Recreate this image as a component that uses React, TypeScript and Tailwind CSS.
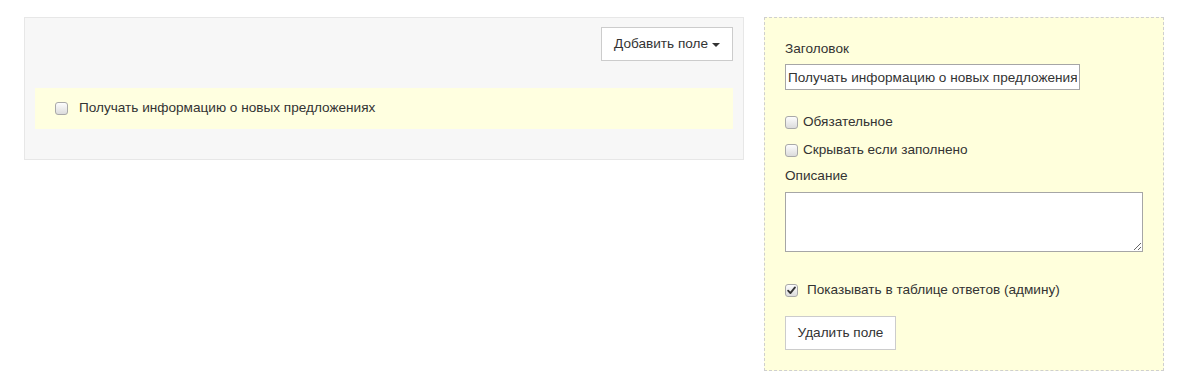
import React from "react";

function Box({ checked = false }: { checked?: boolean }) {
  return (
    <span className="relative inline-block size-[13px] shrink-0 rounded-[3px] border border-[#a9a9a9] bg-gradient-to-b from-[#fdfdfd] to-[#dcdcdc]">
      {checked ? (
        <svg viewBox="0 0 12 12" className="absolute left-[0px] top-[0px] size-[11px]" aria-hidden="true">
          <path d="M2.3 6.2 L4.8 8.8 L9.8 2.6" fill="none" stroke="#333" strokeWidth="2" strokeLinecap="round" strokeLinejoin="round" />
        </svg>
      ) : null}
    </span>
  );
}

function CheckRow({ label, checked, gap }: { label: string; checked?: boolean; gap: string }) {
  return (
    <label className={`flex items-center ${gap}`}>
      <Box checked={checked} />
      <span>{label}</span>
    </label>
  );
}

export default function App() {
  return (
    <div className="flex min-h-[389px] items-start gap-[20px] bg-white pl-[24px] pt-[17px] font-['Liberation_Sans',Arial,sans-serif] text-[13.6px] text-[#333]">
      <section className="flex h-[143px] w-[720px] flex-col border border-[#e7e7e7] bg-[#f7f7f7] px-[10px] pt-[9px]">
        <div className="flex justify-end">
          <button className="flex h-[34px] items-center gap-[4px] border border-[#cccccc] bg-white px-[12px] text-[13.6px] text-[#333]">
            Добавить поле
            <svg viewBox="0 0 8 4" className="mt-[1px] h-[4px] w-[8px]" aria-hidden="true">
              <path d="M0 0 H8 L4 4 Z" fill="#333" />
            </svg>
          </button>
        </div>
        <div className="mt-[27px] flex h-[41px] items-center bg-[#ffffe0] pl-[20px]">
          <CheckRow label="Получать информацию о новых предложениях" gap="gap-[11px]" />
        </div>
      </section>

      <section className="h-[354px] w-[400px] border border-dashed border-[#cfcfcf] bg-[#ffffdc] px-[20px] pt-[22px]">
        <div className="leading-[18px]">Заголовок</div>
        <input
          readOnly
          value="Получать информацию о новых предложениях"
          className="mt-[6px] block h-[26px] w-[295px] border border-[#a6a6a6] bg-white px-[2px] text-[13.6px] text-[#333] outline-none"
        />
        <div className="mt-[23px] flex flex-col gap-[10px] leading-[18px]">
          <CheckRow label="Обязательное" gap="gap-[5px]" />
          <CheckRow label="Скрывать если заполнено" gap="gap-[5px]" />
        </div>
        <div className="mt-[8px] leading-[18px]">Описание</div>
        <textarea
          readOnly
          className="mt-[7px] block h-[60px] w-[358px] border border-[#a6a6a6] bg-white outline-none"
        />
        <div className="mt-[29px] leading-[18px]">
          <CheckRow label="Показывать в таблице ответов (админу)" checked gap="gap-[9px]" />
        </div>
        <button className="mt-[17px] h-[34px] w-[111px] border border-[#cccccc] bg-white text-[13.6px] text-[#333]">
          Удалить поле
        </button>
      </section>
    </div>
  );
}
